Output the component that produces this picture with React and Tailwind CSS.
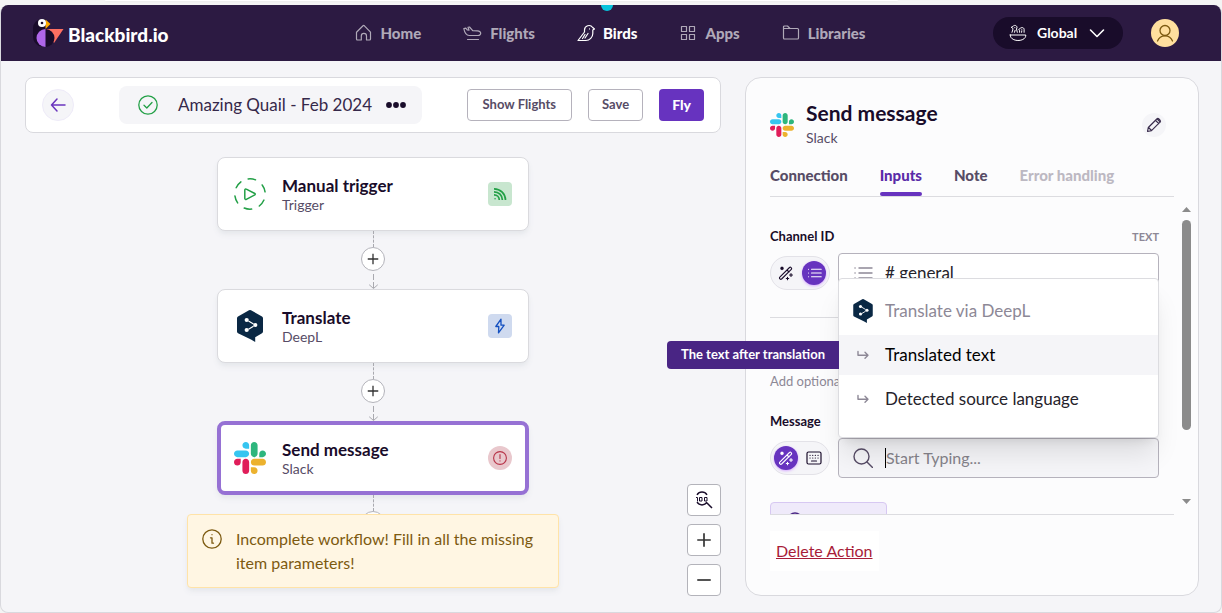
import React from 'react';

function Svg({ children, className = '', box = '0 0 24 24', sw = 1.5 }) {
  return (
    <svg
      aria-hidden="true"
      viewBox={box}
      className={`shrink-0 ${className}`}
      fill="none"
      stroke="currentColor"
      strokeWidth={sw}
      strokeLinecap="round"
      strokeLinejoin="round"
    >
      {children}
    </svg>
  );
}

function BlackbirdLogo() {
  return (
    <svg aria-hidden="true" viewBox="0 0 31 28" className="h-7 w-[31px] shrink-0">
      <path d="M13 0H9A9 9 0 0 0 0 9v8a11 11 0 0 0 6 10l7 1z" fill="#190c2a" />
      <path d="M13 10h17.500L21 24z" fill="#ff6f61" />
      <path d="M12.500 10a9 9 0 0 1 0 18z" fill="#190c2a" />
      <path d="M12.500 10a9 9 0 0 0 0 18z" fill="#ae66e8" />
      <path d="M12.500 .5L17.500 5l-5 5z" fill="#ffab00" />
      <circle cx="9" cy="4" r="4" fill="#fff" />
      <circle cx="9" cy="4" r="1.300" fill="#190c2a" />
    </svg>
  );
}

function SlackLogo({ className }) {
  return (
    <svg aria-hidden="true" viewBox="0 0 122.8 122.8" className={`shrink-0 ${className}`}>
      <path d="M25.8 77.6c0 7.1-5.8 12.9-12.9 12.9S0 84.7 0 77.6s5.8-12.9 12.9-12.9h12.9v12.9zm6.5 0c0-7.1 5.8-12.9 12.9-12.9s12.9 5.8 12.9 12.9v32.3c0 7.1-5.8 12.9-12.9 12.9s-12.9-5.8-12.9-12.9V77.6z" fill="#e01e5a" />
      <path d="M45.2 25.8c-7.1 0-12.9-5.8-12.9-12.9S38.1 0 45.2 0s12.9 5.8 12.9 12.9v12.9H45.2zm0 6.5c7.1 0 12.9 5.8 12.9 12.9s-5.8 12.9-12.9 12.9H12.9C5.8 58.1 0 52.3 0 45.2s5.8-12.9 12.9-12.9h32.3z" fill="#36c5f0" />
      <path d="M97 45.2c0-7.1 5.8-12.9 12.9-12.9s12.9 5.8 12.9 12.9-5.800 12.900-12.900 12.900H97V45.200zm-6.500 0c0 7.100-5.800 12.900-12.900 12.900s-12.900-5.800-12.900-12.900V12.900C64.700 5.800 70.500 0 77.600 0s12.900 5.800 12.900 12.900v32.300z" fill="#2eb67d" />
      <path d="M77.6 97c7.1 0 12.9 5.8 12.9 12.9s-5.8 12.9-12.9 12.9-12.9-5.8-12.9-12.9V97h12.9zm0-6.5c-7.1 0-12.9-5.8-12.9-12.9s5.8-12.9 12.9-12.9h32.3c7.1 0 12.9 5.8 12.9 12.9s-5.8 12.9-12.9 12.9H77.6z" fill="#ecb22e" />
    </svg>
  );
}

function DeepLLogo({ className }) {
  return (
    <svg aria-hidden="true" viewBox="0 0 26 32" className={`shrink-0 ${className}`}>
      <path d="M12 .3a2 2 0 0 1 2 0l11 6.200a2 2 0 0 1 1 1.700v13.300a2 2 0 0 1-1 1.700l-6.800 4V32l-4.200-2.500L1 23.200a2 2 0 0 1-1-1.700V8.200a2 2 0 0 1 1-1.700z" fill="#0a2844" />
      <path d="M11.500 11l5 3M16.500 16.300l-5 3" stroke="#fff" strokeWidth="1.200" />
      <circle cx="9.700" cy="10" r="2.100" fill="#fff" />
      <circle cx="18.300" cy="15" r="2.100" fill="#fff" />
      <circle cx="9.700" cy="20" r="2.100" fill="#fff" />
    </svg>
  );
}

function HomeIcon() {
  return (
    <Svg box="0 0 18 18" className="size-[18px]" sw={1.2}>
      <path d="M1.500 8.200L8 1.800a1 1 0 0 1 1.400 0l6.100 6.400v6.800a1 1 0 0 1-1 1h-3v-4a2.600 2.600 0 0 0-5.200 0v4h-3.800a1 1 0 0 1-1-1z" />
    </Svg>
  );
}

function PlaneIcon() {
  return (
    <Svg box="0 0 19 18" className="h-[18px] w-[19px]" sw={1.2}>
      <path d="M.8 4.500l2-.3 1.400 1.700 1.800.2L5 3.300 6.500 3l3.200 3.600 4.800.2c4.200.3 4.200 4.700.4 4.700H6.200c-2.600 0-4.300-1.200-5.400-7zM4.500 15.500h11" />
    </Svg>
  );
}

function BirdIcon() {
  return (
    <Svg box="0 0 18 18" className="size-[18px]" sw={1.2}>
      <path d="M1 16.500L7.500 8V6a4.500 4.500 0 0 1 8.200-2.500L17.500 5l-1.700 1v3.500a7 7 0 0 1-7 7zM5.500 14.500L8 10.500M8 14l3-4.500M12.500 4.800v.1" />
    </Svg>
  );
}

function AppsIcon() {
  return (
    <Svg box="0 0 18 18" className="size-[18px]" sw={1.2}>
      <path d="M2.500 2.500h5v5h-5zM10.500 2.500h5v5h-5zM2.500 10.500h5v5h-5zM10.500 10.500h5v5h-5z" />
    </Svg>
  );
}

function FolderIcon() {
  return (
    <Svg box="0 0 18 18" className="size-[18px]" sw={1.2}>
      <path d="M1.500 14V3a1 1 0 0 1 1-1h3l2.500 2.500h7.500a1 1 0 0 1 1 1V14a1 1 0 0 1-1 1h-13a1 1 0 0 1-1-1zM1.500 4.500H8" />
    </Svg>
  );
}

function NestIcon() {
  return (
    <Svg box="0 0 18 18" className="size-[18px] text-white" sw={1}>
      <path d="M1.200 11h15.600c.3 7.400-15.900 7.400-15.600 0zM3 8.300l.8-2.500V4.200L2.200 3.300l1.600-.8c1-1.600 4-1.600 4.200 1L7.500 5l.8 3.300M5.800 3.600v.1M5.500 8.300l.6-2M10.600 8.300V6.400l-1-.8 1.300-.9c.8-1.700 4-1.600 4.200.6v3M12.600 8.300l.2-1.500M12.800 5.200v.1" />
    </Svg>
  );
}

function WandIcon() {
  return (
    <Svg box="0 0 16 16" className="size-4" sw={1.100}>
      <path d="M1.800 12.200L11.500 2.500a1 1 0 0 1 1.500 0l.3.3a1 1 0 0 1 0 1.500L3.600 14a1 1 0 0 1-1.500 0l-.3-.3a1 1 0 0 1 0-1.500zM9 5l2 2M13 8.500v3M11.500 10h3M9.500 12.300v2.400M8.300 13.500h2.400M4 2v2.600M2.700 3.300h2.600M3.100 2.400l1.800 1.800M4.900 2.400L3.100 4.200" />
    </Svg>
  );
}

function ListIcon({ className }) {
  return (
    <Svg box="0 0 20 16" className={className} sw={1.400}>
      <path d="M2 3h.1M2 8h.1M2 13h.1M6 3h13M6 8h13M6 13h13" />
    </Svg>
  );
}

function KeyboardIcon() {
  return (
    <Svg box="0 0 16 14" className="h-3.5 w-4" sw={1.200}>
      <rect x="1" y="1" width="14" height="12" rx="1.500" />
      <path d="M4 4.300h.1M6.700 4.300h.1M9.300 4.300h.1M12 4.300h.1M4 7h.1M6.700 7h.1M9.300 7h.1M12 7h.1M5.500 10h5" />
    </Svg>
  );
}

function SignalIcon() {
  return (
    <Svg box="0 0 16 16" className="size-4 text-[#23a047]" sw={1.700}>
      <path strokeLinecap="butt" d="M2 2.800c6.500 0 11.500 5 11.500 11.200M2 5.800c4.800 0 8.400 3.600 8.400 8.200M2 8.800c3 0 5.300 2.200 5.300 5.200" />
      <path strokeWidth="1.400" d="M3 12.800h.1" />
    </Svg>
  );
}

function PlusIcon({ className }) {
  return (
    <Svg box="0 0 16 16" className={className} sw={1.500}>
      <path strokeLinecap="butt" d="M8 2v12M2 8h12" />
    </Svg>
  );
}

const NAV = [
  { label: 'Home', icon: <HomeIcon /> },
  { label: 'Flights', icon: <PlaneIcon /> },
  { label: 'Birds', icon: <BirdIcon />, active: true },
  { label: 'Apps', icon: <AppsIcon /> },
  { label: 'Libraries', icon: <FolderIcon /> },
];

function Header() {
  return (
    <header className="grid h-14 shrink-0 grid-cols-[1fr_auto_1fr] items-center bg-[#2c1a42] pr-[42px] pl-8">
      <a href="#home" className="flex items-center gap-1 text-[19px] font-black text-white">
        <BlackbirdLogo />
        <span className="pt-1">Blackbird.io</span>
      </a>
      <nav className="flex h-full gap-[42px] pl-2">
        {NAV.map((n) => (
          <a
            key={n.label}
            href={`#${n.label.toLowerCase()}`}
            className={`relative flex items-center gap-2 text-[15px] font-black ${n.active ? 'text-white' : 'text-[#b0a9b8]'}`}
          >
            {n.active && (
              <span className="absolute top-0 left-1/2 h-1.5 w-3 -translate-x-1/2 rounded-b-full bg-[#06c3dc]" />
            )}
            {n.icon}
            {n.label}
          </a>
        ))}
      </nav>
      <div className="flex items-center gap-7 justify-self-end">
        <button type="button" className="flex h-8 w-[130px] items-center rounded-full bg-[#190c2a] pr-[18px] pl-4 text-sm font-bold text-white">
          <NestIcon />
          <span className="ml-2.5">Global</span>
          <Svg box="0 0 16 16" className="ml-auto size-4" sw={1.600}>
            <path d="M1.500 5L8 11.500 14.500 5" />
          </Svg>
        </button>
        <button type="button" aria-label="Account" className="flex size-7 items-center justify-center rounded-full bg-[#ffdf9e] text-[#7d5a10]">
          <Svg box="0 0 18 18" className="size-[18px]" sw={1.300}>
            <circle cx="9" cy="6.500" r="5" />
            <path d="M1.500 17a8 8 0 0 1 15 0" />
          </Svg>
        </button>
      </div>
    </header>
  );
}

function Toolbar() {
  return (
    <div className="flex h-14 shrink-0 items-center rounded-lg border border-[#d9d9de] bg-white px-4">
      <button type="button" aria-label="Back" className="flex size-8 shrink-0 items-center justify-center rounded-full border border-[#eeebf8] bg-[#f5f5f8] text-[#6a35bd]">
        <Svg box="0 0 16 16" className="size-4" sw={1.500}>
          <path d="M15 8H1.500M7 2L1.500 8 7 14" />
        </Svg>
      </button>
      <div className="ml-[45px] flex h-[38px] items-center rounded-lg bg-[#f5f5f8] pr-4 pl-[19px]">
        <Svg box="0 0 20 20" className="size-5 text-[#23a047]" sw={1.300}>
          <circle cx="10" cy="10" r="9.200" />
          <path d="M6 10.300l2.800 2.700L14 7.500" />
        </Svg>
        <h1 className="mr-3.5 ml-5 text-[17px] whitespace-nowrap text-[#35284a]">Amazing Quail - Feb 2024</h1>
        <button type="button" aria-label="More" className="text-[#190c2a]">
          <svg aria-hidden="true" viewBox="0 0 20 6" className="h-1.5 w-5" fill="currentColor">
            <circle cx="3" cy="3" r="2.900" />
            <circle cx="10" cy="3" r="2.900" />
            <circle cx="17" cy="3" r="2.900" />
          </svg>
        </button>
      </div>
      <div className="ml-auto flex gap-4">
        <button type="button" className="h-8 rounded-sm border border-[#b5b2bc] bg-white px-[15px] text-[13px] font-bold whitespace-nowrap text-[#574c66]">Show Flights</button>
        <button type="button" className="h-8 rounded-sm border border-[#b5b2bc] bg-white px-[13px] text-[13px] font-bold text-[#574c66]">Save</button>
        <button type="button" className="h-8 rounded-sm bg-[#6733bf] px-[13px] text-sm font-black text-white">Fly</button>
      </div>
    </div>
  );
}

function FlowNode({ icon, title, subtitle, badge, selected }) {
  return (
    <article
      className={`flex h-[74px] w-full items-center rounded-lg bg-white shadow-md shadow-gray-200 ${selected ? 'border-4 border-[#9671d4] px-[13px]' : 'border border-[#dadade] px-4'}`}
    >
      <div className="flex w-8 justify-center">{icon}</div>
      <div className="ml-4 flex-1 pt-0.5">
        <h2 className="text-[17px] leading-5 font-bold text-[#190c2a]">{title}</h2>
        <p className="text-sm leading-[18px] text-[#574c66]">{subtitle}</p>
      </div>
      {badge}
    </article>
  );
}

function Connector() {
  return (
    <div className="relative flex h-[58px] w-6 flex-col items-center">
      <div className="h-4 border-l border-dashed border-[#a9a9af]" />
      <button type="button" aria-label="Add step" className="flex size-6 shrink-0 items-center justify-center rounded-full border border-[#b3b3ba] bg-white text-[#333]">
        <PlusIcon className="size-3.5" />
      </button>
      <Svg box="0 0 10 18" className="h-[18px] w-2.5 text-[#a9a9af]" sw={1}>
        <path strokeLinecap="butt" strokeDasharray="6 2" d="M5.500 3v14" />
        <path d="M1.500 14l4 3.500 4-3.500" />
      </Svg>
    </div>
  );
}

function Canvas() {
  return (
    <div className="relative min-h-0 flex-1 overflow-y-clip">
      <div className="mx-auto mt-6 flex w-[312px] max-w-full flex-col items-center">
        <FlowNode
          title="Manual trigger"
          subtitle="Trigger"
          icon={
            <Svg box="0 0 32 32" className="size-8 text-[#23a047]" sw={1.500}>
              <circle cx="16" cy="16" r="15.200" strokeDasharray="7.500 8.400" transform="rotate(-97 16 16)" />
              <path d="M10.800 12v8.500a1 1 0 0 0 1.500.8l8.500-4.400a.8.8 0 0 0 0-1.400l-8.500-4.400a1 1 0 0 0-1.500.9z" />
            </Svg>
          }
          badge={<span className="flex size-6 items-center justify-center rounded-sm bg-[#c8e6cf]"><SignalIcon /></span>}
        />
        <Connector />
        <FlowNode
          title="Translate"
          subtitle="DeepL"
          icon={<DeepLLogo className="h-8 w-[26px]" />}
          badge={
            <span className="flex size-6 items-center justify-center rounded-sm bg-[#cfdaef] text-[#1450c0]">
              <Svg box="0 0 16 16" className="size-4" sw={1.300}>
                <path d="M9 1.200L3.800 8.500h3L6.500 14.800l5.700-7.600H9z" />
              </Svg>
            </span>
          }
        />
        <Connector />
        <FlowNode
          selected
          title="Send message"
          subtitle="Slack"
          icon={<SlackLogo className="size-8" />}
          badge={
            <span className="flex size-6 items-center justify-center rounded-full bg-[#e9c8cd] text-[#b73348]">
              <Svg box="0 0 14 14" className="size-3.5" sw={1.100}>
                <circle cx="7" cy="7" r="6.400" />
                <path d="M7 3.500v4M7 9.900v.1" />
              </Svg>
            </span>
          }
        />
        <Connector />
      </div>

      <div role="alert" className="absolute bottom-2 left-1/2 flex h-[74px] w-[372px] -translate-x-1/2 gap-3.5 rounded-sm border border-[#ffe3a8] bg-[#fff6e3] px-3.5 pt-3 text-base leading-6 text-[#7d5a10] shadow-md shadow-gray-200">
        <Svg box="0 0 20 20" className="mt-0.5 size-5" sw={1.300}>
          <circle cx="10" cy="10" r="9.200" />
          <path d="M8.500 8.800H10v5.400h1.500M10 5.600v.1" />
        </Svg>
        <p>
          Incomplete workflow! Fill in all the missing
          <br />
          item parameters!
        </p>
      </div>

      <div className="absolute right-0 bottom-0 flex flex-col gap-2 text-[#333] *:flex *:h-8 *:w-[34px] *:items-center *:justify-center *:rounded-sm *:border *:border-[#b3b3ba] *:bg-white">
        <button type="button" aria-label="Reset zoom">
          <svg aria-hidden="true" viewBox="0 0 18 18" className="size-[18px] text-[#190c2a]" fill="none" stroke="currentColor" strokeWidth="1.500">
            <path d="M2 3.800a6 6 0 0 1 10 0M2 11.200a6 6 0 0 0 10 0M12 12l5 5" />
            <path strokeWidth="1" d="M1 6.500h1.500v4M4.500 6.500h2.500v3.500H4.500zM9.500 6.500h2.500v3.500H9.500z" />
          </svg>
        </button>
        <button type="button" aria-label="Zoom in"><PlusIcon className="size-[18px]" /></button>
        <button type="button" aria-label="Zoom out">
          <Svg box="0 0 16 16" className="size-[18px]" sw={1.500}>
            <path strokeLinecap="butt" d="M2 8h12" />
          </Svg>
        </button>
      </div>
    </div>
  );
}

function ModeSwitch({ left, right, active }) {
  const on = 'bg-[#6733bf] text-white shadow-sm shadow-purple-300';
  return (
    <div className="flex h-[34px] w-[60px] shrink-0 items-center justify-between rounded-full border border-[#e3e2e8] bg-[#f5f5f8] px-[3px] text-[#190c2a]">
      <button type="button" aria-label={left.label} className={`flex size-6 items-center justify-center rounded-full ${active === 'left' ? on : ''}`}>{left.icon}</button>
      <button type="button" aria-label={right.label} className={`flex size-6 items-center justify-center rounded-full ${active === 'right' ? on : ''}`}>{right.icon}</button>
    </div>
  );
}

function OutputArrow() {
  return (
    <Svg box="0 0 12 10" className="h-2.5 w-3 text-[#8d8896]" sw={1.400}>
      <path d="M1 1.500v3.700h10M8 2.200l3 3-3 3" />
    </Svg>
  );
}

function OutputMenu() {
  return (
    <div className="absolute right-0 bottom-full left-0 z-10 flex flex-col gap-1 rounded-sm border border-[#dcdce0] bg-white pt-3 pb-[18px] text-[17px] text-[#26232b] shadow-xl">
      <div className="flex h-10 items-center px-3.5 text-[#8d8896]">
        <DeepLLogo className="h-6 w-5" />
        <span className="ml-3">Translate via DeepL</span>
      </div>
      <button type="button" className="relative flex h-10 items-center bg-[#f5f5f8] pl-[18px] text-black">
        <span role="tooltip" className="absolute right-full flex h-7 w-[172px] items-center justify-center rounded-l-sm bg-[#492584] text-[13px] font-bold whitespace-nowrap text-white">
          The text after translation
        </span>
        <OutputArrow />
        <span className="ml-4">Translated text</span>
      </button>
      <button type="button" className="flex h-10 items-center pl-[18px]">
        <OutputArrow />
        <span className="ml-4">Detected source language</span>
      </button>
    </div>
  );
}

const TABS = [
  { label: 'Connection', style: 'text-[#574c66]' },
  { label: 'Inputs', style: 'text-[#5a2ba8]', active: true },
  { label: 'Note', style: 'text-[#574c66]' },
  { label: 'Error handling', style: 'text-[#bcb8c2]' },
];

function Panel() {
  return (
    <aside className="flex w-[454px] shrink-0 flex-col rounded-2xl border border-[#d9d9de] bg-[#fcfcfd] px-6 pt-[23px] pb-6">
      <div className="flex items-center">
        <SlackLogo className="size-6" />
        <div className="ml-3 flex-1">
          <h2 className="text-[21px] leading-6 font-bold text-[#190c2a]">Send message</h2>
          <p className="pt-0.5 text-sm leading-[22px] text-[#574c66]">Slack</p>
        </div>
        <button type="button" aria-label="Edit name" className="mr-2 flex size-6 items-center justify-center rounded-full bg-[#f5f5f8] text-[#3a2d4d]">
          <Svg box="0 0 16 16" className="size-4" sw={1.200}>
            <path d="M1.500 14.500l.8-4L10.800 2a1.500 1.500 0 0 1 2.100 0l1.100 1.100a1.500 1.500 0 0 1 0 2.100L5.500 13.700zM9.500 3.300l3.200 3.200M11 1.900l3.200 3.200M2.500 10.500l3 3" />
          </Svg>
        </button>
      </div>

      <div role="tablist" className="mt-[13px] flex h-[35px] shrink-0 gap-8 border-b border-[#dcdce0] text-[15px] font-black">
        {TABS.map((t) => (
          <button key={t.label} role="tab" type="button" aria-selected={!!t.active} className={`flex flex-col items-center justify-between pt-0.5 ${t.style}`}>
            <span>{t.label}</span>
            {t.active && <span className="h-1 w-full rounded-sm bg-[#6733bf]" />}
          </button>
        ))}
      </div>

      <div className="-mr-[17px] flex min-h-0 flex-1 gap-[23px] overflow-y-clip">
        <div className="flex-1 pt-[30px]">
          <div className="flex h-5 items-center justify-between text-[13px] font-bold">
            <label htmlFor="channel" className="text-[#190c2a]">Channel ID</label>
            <span className="text-[11px] text-[#8d8896]">TEXT</span>
          </div>
          <div className="mt-1.5 flex items-center gap-2">
            <ModeSwitch
              active="right"
              left={{ label: 'Use output', icon: <WandIcon /> }}
              right={{ label: 'Pick from list', icon: <ListIcon className="h-3 w-[15px]" /> }}
            />
            <div className="flex h-10 min-w-0 flex-1 items-center gap-3 rounded-sm border border-[#b5b2bc] bg-white px-3.5 text-[#26232b]">
              <ListIcon className="h-4 w-5 text-[#8d8896]" />
              <input id="channel" type="text" defaultValue="# general" className="min-w-0 flex-1 bg-transparent text-[17px] outline-none" />
            </div>
          </div>
          <div className="mt-6 border-t border-[#dcdce0]" />
          <p className="mt-[53px] text-[13px] leading-5 text-[#8d8896]">Add optional</p>
          <label htmlFor="message" className="mt-5 block text-[13px] leading-5 font-bold text-[#190c2a]">Message</label>
          <div className="mt-[7px] flex items-center gap-2">
            <ModeSwitch
              active="left"
              left={{ label: 'Use output', icon: <WandIcon /> }}
              right={{ label: 'Type value', icon: <KeyboardIcon /> }}
            />
            <div className="relative min-w-0 flex-1">
              <OutputMenu />
              <div className="flex h-10 items-center rounded-sm border border-[#b5b2bc] bg-[#f5f5f8] px-3.5">
                <Svg box="0 0 20 20" className="size-5 text-[#574c66]" sw={1.400}>
                  <circle cx="8.500" cy="8.500" r="7.500" />
                  <path d="M14 14l5.500 5.500" />
                </Svg>
                <span className="ml-3 h-5 w-px bg-black" />
                <input id="message" type="text" placeholder="Start Typing..." className="min-w-0 flex-1 bg-transparent text-base outline-none placeholder:text-[#85838a]" />
              </div>
            </div>
          </div>
          <button type="button" aria-label="Add item" className="mt-6 flex h-10 w-[117px] rounded-sm border border-[#d7c8f2] bg-[#efeafa] pt-[9px] pl-4 text-[#492584]">
            <Svg box="0 0 16 16" className="size-4" sw={1.500}>
              <circle cx="8" cy="8" r="7" />
              <path d="M8 5v6M5 8h6" />
            </Svg>
          </button>
        </div>
        <div aria-hidden="true" className="flex w-[9px] flex-col items-center pt-2.5 pb-2.5 text-[#8b8b8b]">
          <svg viewBox="0 0 9 5" className="h-[5px] w-[9px]" fill="currentColor"><path d="M0 5L4.500 0 9 5z" /></svg>
          <div className="mt-2 h-[210px] w-[9px] rounded-full bg-[#8b8b8b]" />
          <svg viewBox="0 0 9 5" className="mt-auto h-[5px] w-[9px]" fill="currentColor"><path d="M0 0h9L4.500 5z" /></svg>
        </div>
      </div>

      <div className="border-t border-[#dcdce0] pt-4">
        <button type="button" className="h-10 bg-white px-1.5 text-base text-[#a81c38] underline">Delete Action</button>
      </div>
    </aside>
  );
}

export default function App() {
  return (
    <div className="flex h-screen flex-col bg-[#f4f4f4] font-['Lato',sans-serif]">
      <div className="h-[5px] shrink-0 pr-[324px] pl-[105px]">
        <div className="h-px rounded-b-lg bg-white shadow-xs" />
      </div>
      <div className="flex min-h-0 flex-1 flex-col overflow-hidden rounded-t-lg rounded-b-lg border-x border-b border-[#d9d9de] bg-[#f5f5f8]">
        <Header />
        <main className="flex min-h-0 flex-1 gap-6 p-4 pr-[22px] pl-6">
          <section className="flex min-w-0 flex-1 flex-col">
            <Toolbar />
            <Canvas />
          </section>
          <Panel />
        </main>
      </div>
    </div>
  );
}
